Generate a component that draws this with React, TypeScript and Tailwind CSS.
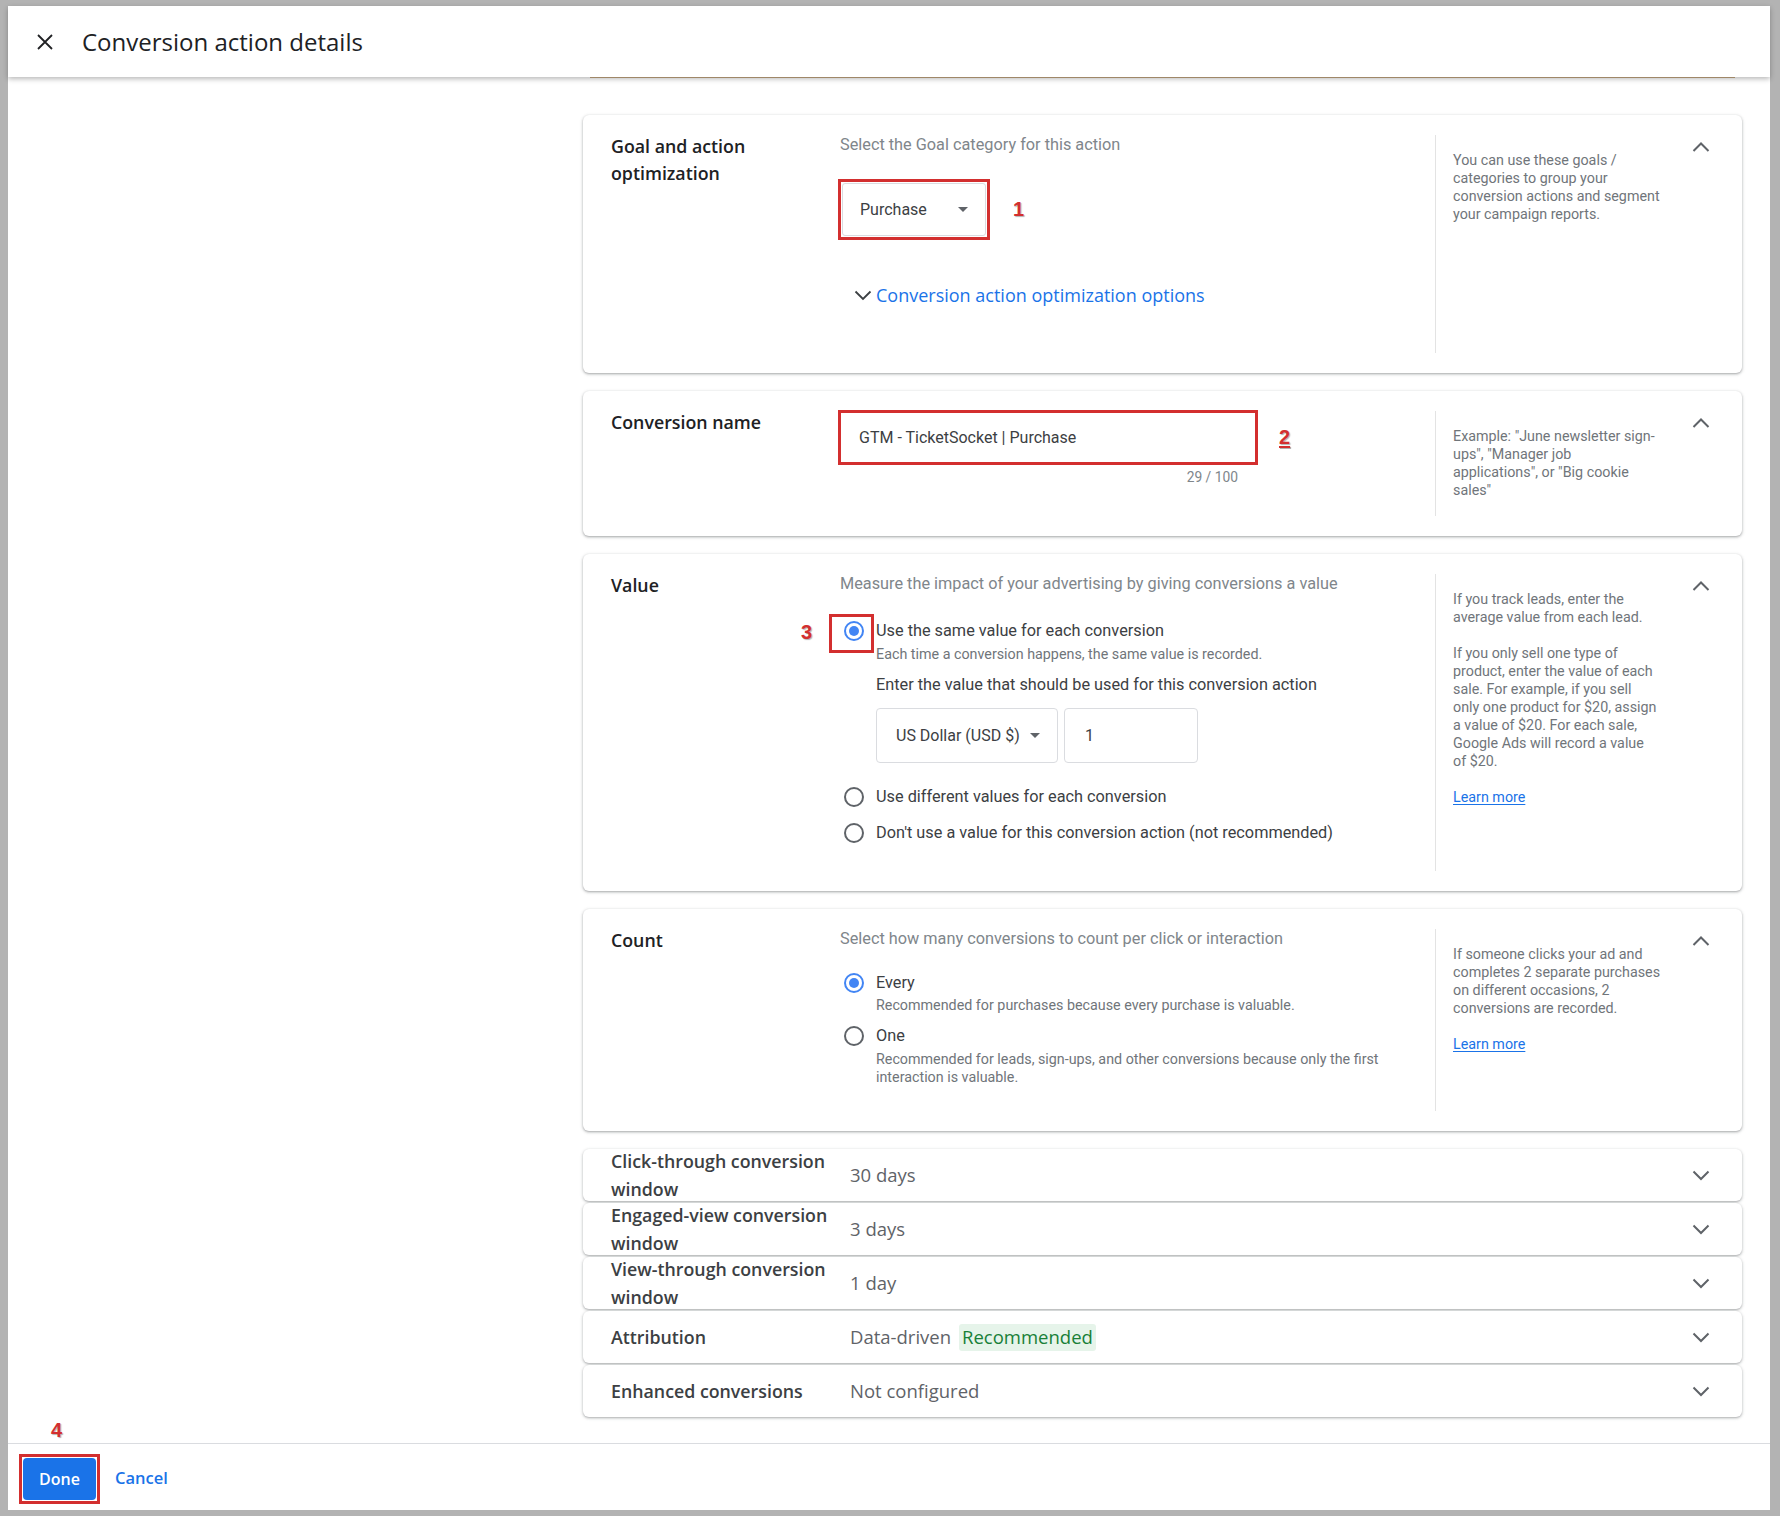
import React from "react";

function CloseIcon() {
  return (
    <svg width="16" height="16" viewBox="0 0 16 16" className="shrink-0">
      <path d="M1 1 L15 15 M15 1 L1 15" stroke="#202124" strokeWidth="1.8" fill="none" />
    </svg>
  );
}

function Chevron({ up }: { up?: boolean }) {
  return (
    <svg width="18" height="11" viewBox="0 0 18 11" className="shrink-0 block">
      <path
        d={up ? "M1.5 10 L9 2.5 L16.5 10" : "M1.5 1.5 L9 9 L16.5 1.5"}
        fill="none"
        stroke="#5f6368"
        strokeWidth="2"
      />
    </svg>
  );
}

function Caret() {
  return (
    <svg width="10" height="5" viewBox="0 0 10 5" className="shrink-0">
      <path d="M0 0h10L5 5z" fill="#5f6368" />
    </svg>
  );
}

function Radio({ on }: { on?: boolean }) {
  if (on) {
    return (
      <span className="w-[20px] h-[20px] rounded-full border-2 border-[#4285f4] flex items-center justify-center shrink-0">
        <span className="block w-[10px] h-[10px] rounded-full bg-[#4285f4]" />
      </span>
    );
  }
  return <span className="block w-[20px] h-[20px] rounded-full border-2 border-[#5f6368] shrink-0" />;
}

function Mark({ n, underline }: { n: string; underline?: boolean }) {
  return (
    <span
      className={
        underline
          ? "font-['Liberation_Sans',sans-serif] font-bold text-[20px] leading-[24px] text-[#d32f2f] underline underline-offset-2 [text-shadow:1px_1px_1px_rgba(0,0,0,0.3)]"
          : "font-['Liberation_Sans',sans-serif] font-bold text-[20px] leading-[24px] text-[#d32f2f] [text-shadow:1px_1px_1px_rgba(0,0,0,0.3)]"
      }
    >
      {n}
    </span>
  );
}

type CardProps = {
  h: string;
  label: React.ReactNode;
  children: React.ReactNode;
  help: React.ReactNode;
};

function Card({ h, label, children, help }: CardProps) {
  return (
    <div
      className={
        "flex rounded-[6px] bg-white shadow-[0_1px_2px_rgba(60,64,67,0.3),0_1px_3px_1px_rgba(60,64,67,0.15)] " + h
      }
    >
      <div className="w-[257px] shrink-0 pl-[28px] pt-[18px] text-[17.8px] leading-[27px] font-semibold text-[#202124] font-['Open_Sans',sans-serif]">
        {label}
      </div>
      <div className="w-[595px] shrink-0 pt-[20px]">{children}</div>
      <div className="my-[20px] w-[235px] shrink-0 border-l border-[#e3e3e3] pl-[17px] pt-[16px] text-[14.3px] leading-[18px] text-[#70757a]">
        {help}
      </div>
      <div className="flex-1 pl-[22px] pt-[26px]">
        <Chevron up />
      </div>
    </div>
  );
}

function Lines({ lines }: { lines: string[] }) {
  return (
    <div>
      {lines.map((l) => (
        <div key={l} className="whitespace-nowrap">
          {l}
        </div>
      ))}
    </div>
  );
}

function LearnMore() {
  return <div className="mt-[18px] text-[#1a73e8] underline underline-offset-2">Learn more</div>;
}

function Row({ label, value }: { label: React.ReactNode; value: React.ReactNode }) {
  return (
    <div className="h-[52px] flex items-center rounded-[6px] bg-white shadow-[0_1px_2px_rgba(60,64,67,0.3),0_1px_3px_1px_rgba(60,64,67,0.12)]">
      <div className="w-[267px] shrink-0 pl-[28px] text-[17.8px] leading-[28px] font-semibold text-[#3c4043] font-['Open_Sans',sans-serif]">
        {label}
      </div>
      <div className="flex-1 flex items-center text-[18.5px] text-[#5f6368] font-['Open_Sans',sans-serif]">{value}</div>
      <div className="pr-[32px]">
        <Chevron />
      </div>
    </div>
  );
}

export default function App() {
  return (
    <div className="w-[1780px] h-[1516px] bg-[#b3b3b3] pt-[6px] pl-[8px] pr-[10px] pb-[6px] font-['Roboto',sans-serif]">
      <div className="h-full bg-white flex flex-col">
        {/* Top bar */}
        <div className="relative z-10 h-[71px] shrink-0 flex items-center bg-white shadow-[0_2px_5px_rgba(0,0,0,0.28)]">
          <div className="ml-[29px]">
            <CloseIcon />
          </div>
          <div className="ml-[29px] text-[24px] text-[#202124] font-['Open_Sans',sans-serif]">
            Conversion action details
          </div>
        </div>

        {/* Scrolling body */}
        <div className="flex-1 flex">
          <div className="w-[575px] shrink-0" />
          <div className="w-[1159px] shrink-0 flex flex-col">
            <div className="mx-[7px] h-px bg-[#c7a982]" />

            <div className="mt-[37px] flex flex-col gap-[18px]">
              {/* Goal */}
              <Card
                h="h-[258px]"
                label={
                  <>
                    Goal and action
                    <br />
                    optimization
                  </>
                }
                help={
                  <Lines
                    lines={[
                      "You can use these goals /",
                      "categories to group your",
                      "conversion actions and segment",
                      "your campaign reports.",
                    ]}
                  />
                }
              >
                <div className="text-[16.3px] leading-[20px] text-[#80868b]">Select the Goal category for this action</div>
                <div className="mt-[24px] flex items-center">
                  <div className="-ml-[2px] border-[3px] border-[#d32f2f] p-[1px]">
                    <div className="w-[144px] h-[53px] border border-[#dadce0] rounded-[3px] flex items-center justify-between pl-[17px] pr-[17px] text-[16px] text-[#3c4043]">
                      <span>Purchase</span>
                      <Caret />
                    </div>
                  </div>
                  <div className="ml-[23px]">
                    <Mark n="1" />
                  </div>
                </div>
                <div className="mt-[43px] ml-[14px] flex items-center h-[24px]">
                  <svg width="18" height="11" viewBox="0 0 18 11" className="shrink-0">
                    <path d="M1.5 1.5 L9 9 L16.5 1.5" fill="none" stroke="#3c4043" strokeWidth="1.8" />
                  </svg>
                  <span className="ml-[4px] text-[18px] text-[#1a73e8] font-['Open_Sans',sans-serif]">
                    Conversion action optimization options
                  </span>
                </div>
              </Card>

              {/* Name */}
              <Card
                h="h-[145px]"
                label="Conversion name"
                help={
                  <Lines
                    lines={[
                      'Example: "June newsletter sign-',
                      'ups", "Manager job',
                      'applications", or "Big cookie',
                      'sales"',
                    ]}
                  />
                }
              >
                <div className="-mt-[1px] -ml-[2px] flex items-center">
                  <div className="w-[420px] h-[55px] border-[3px] border-[#d32f2f] flex items-center pl-[18px] text-[16px] text-[#3c4043]">
                    GTM - TicketSocket | Purchase
                  </div>
                  <div className="ml-[21px]">
                    <Mark n="2" underline />
                  </div>
                </div>
                <div className="-ml-[2px] w-[420px] pr-[20px] mt-[4px] text-right text-[13.8px] leading-[16px] text-[#80868b]">
                  29 / 100
                </div>
              </Card>

              {/* Value */}
              <Card
                h="h-[337px]"
                label="Value"
                help={
                  <>
                    <Lines lines={["If you track leads, enter the", "average value from each lead."]} />
                    <div className="mt-[18px]">
                      <Lines
                        lines={[
                          "If you only sell one type of",
                          "product, enter the value of each",
                          "sale. For example, if you sell",
                          "only one product for $20, assign",
                          "a value of $20. For each sale,",
                          "Google Ads will record a value",
                          "of $20.",
                        ]}
                      />
                    </div>
                    <LearnMore />
                  </>
                }
              >
                <div className="text-[16.3px] leading-[20px] text-[#80868b] whitespace-nowrap">
                  Measure the impact of your advertising by giving conversions a value
                </div>

                <div className="mt-[27px] relative flex items-start">
                  <div className="absolute left-[-39px] top-[-1px]">
                    <Mark n="3" />
                  </div>
                  <div className="absolute left-[-11px] top-[-7px] w-[45px] h-[39px] border-[3px] border-[#d32f2f]" />
                  <div className="w-[36px] shrink-0 pl-[4px]">
                    <Radio on />
                  </div>
                  <div>
                    <div className="text-[16.3px] leading-[20px] text-[#3c4043]">Use the same value for each conversion</div>
                    <div className="mt-[4px] text-[14.3px] leading-[18px] text-[#70757a]">
                      Each time a conversion happens, the same value is recorded.
                    </div>
                    <div className="mt-[12px] text-[16.3px] leading-[20px] text-[#3c4043]">
                      Enter the value that should be used for this conversion action
                    </div>
                    <div className="mt-[13px] flex">
                      <div className="w-[182px] h-[55px] border border-[#dadce0] rounded-[4px] flex items-center justify-between pl-[19px] pr-[17px] text-[16px] text-[#3c4043]">
                        <span>US Dollar (USD $)</span>
                        <Caret />
                      </div>
                      <div className="ml-[6px] w-[134px] h-[55px] border border-[#dadce0] rounded-[4px] flex items-center pl-[20px] text-[16px] text-[#3c4043]">
                        1
                      </div>
                    </div>
                  </div>
                </div>

                <div className="mt-[24px] flex items-center">
                  <div className="w-[36px] shrink-0 pl-[4px]">
                    <Radio />
                  </div>
                  <div className="text-[16.3px] leading-[20px] text-[#3c4043]">Use different values for each conversion</div>
                </div>
                <div className="mt-[16px] flex items-center">
                  <div className="w-[36px] shrink-0 pl-[4px]">
                    <Radio />
                  </div>
                  <div className="text-[16.3px] leading-[20px] text-[#3c4043] whitespace-nowrap">
                    Don't use a value for this conversion action (not recommended)
                  </div>
                </div>
              </Card>

              {/* Count */}
              <Card
                h="h-[222px]"
                label="Count"
                help={
                  <>
                    <Lines
                      lines={[
                        "If someone clicks your ad and",
                        "completes 2 separate purchases",
                        "on different occasions, 2",
                        "conversions are recorded.",
                      ]}
                    />
                    <LearnMore />
                  </>
                }
              >
                <div className="text-[16.3px] leading-[20px] text-[#80868b]">
                  Select how many conversions to count per click or interaction
                </div>
                <div className="mt-[24px] flex items-start">
                  <div className="w-[36px] shrink-0 pl-[4px]">
                    <Radio on />
                  </div>
                  <div>
                    <div className="text-[16.3px] leading-[20px] text-[#3c4043]">Every</div>
                    <div className="mt-[3px] text-[14.3px] leading-[18px] text-[#70757a]">
                      Recommended for purchases because every purchase is valuable.
                    </div>
                  </div>
                </div>
                <div className="mt-[12px] flex items-start">
                  <div className="w-[36px] shrink-0 pl-[4px]">
                    <Radio />
                  </div>
                  <div>
                    <div className="text-[16.3px] leading-[20px] text-[#3c4043]">One</div>
                    <div className="mt-[4px] text-[14.3px] leading-[18px] text-[#70757a] whitespace-nowrap">
                      Recommended for leads, sign-ups, and other conversions because only the first
                      <br />
                      interaction is valuable.
                    </div>
                  </div>
                </div>
              </Card>

              {/* Collapsed settings */}
              <div className="flex flex-col gap-[2px]">
                <Row
                  label={
                    <>
                      <div className="whitespace-nowrap">Click-through conversion</div>
                      <div>window</div>
                    </>
                  }
                  value="30 days"
                />
                <Row
                  label={
                    <>
                      <div className="whitespace-nowrap">Engaged-view conversion</div>
                      <div>window</div>
                    </>
                  }
                  value="3 days"
                />
                <Row
                  label={
                    <>
                      <div className="whitespace-nowrap">View-through conversion</div>
                      <div>window</div>
                    </>
                  }
                  value="1 day"
                />
                <Row
                  label="Attribution"
                  value={
                    <>
                      <span>Data-driven</span>
                      <span className="ml-[8px] px-[3px] h-[27px] flex items-center rounded-[3px] bg-[#e6f4ea] text-[#188038] font-medium">
                        Recommended
                      </span>
                    </>
                  }
                />
                <Row label="Enhanced conversions" value="Not configured" />
              </div>
            </div>
          </div>
        </div>

        {/* Footer actions */}
        <div className="relative h-[67px] shrink-0 border-t border-[#dadce0] flex items-center pl-[11px] pt-[3px]">
          <div className="absolute left-[43px] top-[-26px]">
            <Mark n="4" />
          </div>
          <div className="border-[3px] border-[#d32f2f] p-[1px]">
            <div className="w-[73px] h-[42px] rounded-[4px] bg-[#1a73e8] flex items-center justify-center text-white text-[16px] font-semibold font-['Open_Sans',sans-serif]">
              Done
            </div>
          </div>
          <div className="ml-[15px] text-[16.5px] text-[#1a73e8] font-semibold font-['Open_Sans',sans-serif]">Cancel</div>
        </div>
      </div>
    </div>
  );
}
